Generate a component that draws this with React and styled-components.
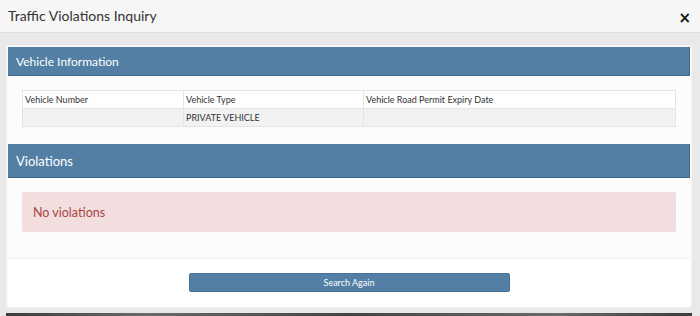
import React from 'react';
import styled, { createGlobalStyle } from 'styled-components';

const GlobalStyle = createGlobalStyle`
  html, body {
    margin: 0;
    padding: 0;
    background: #e9e9e9;
    font-family: Lato, "Open Sans", "Liberation Sans", sans-serif;
  }
`;

const Modal = styled.div`
  width: 700px;
  height: 316px;
  display: flex;
  flex-direction: column;
  background: #e9e9e9;
  overflow: hidden;
`;

const Header = styled.div`
  height: 32px;
  flex-shrink: 0;
  display: flex;
  align-items: center;
  justify-content: space-between;
  padding: 0 9px 0 8px;
  background: #f6f6f6;
  border-bottom: 1px solid #dedede;
`;

const Title = styled.h4`
  margin: 0;
  font-size: 14px;
  font-weight: 400;
  color: #333;
  padding-bottom: 1px;
`;

const Close = styled.button`
  border: 0;
  background: none;
  padding: 0;
  font-size: 15px;
  font-weight: 700;
  color: #111;
  line-height: 1;
  cursor: pointer;
  font-family: "DejaVu Sans", sans-serif;
  margin-top: 4px;
`;

const Body = styled.div`
  flex: 1;
  padding: 12px 8px 0 6px;
  display: flex;
  flex-direction: column;
`;

const Panel = styled.div`
  flex-shrink: 0;
  background: #fcfcfc;
  border: 1px solid #f3f3f3;
  border-radius: 3px;
  padding: 1px 1px 0;
`;

const SectionHeader = styled.div`
  height: ${p => p.$h}px;
  box-sizing: border-box;
  display: flex;
  align-items: center;
  padding-left: 8px;
  background: #527fa3;
  border-right: 1px solid #3e6889;
  border-bottom: 1px solid #3e6889;
  color: #fff;
  font-size: ${p => p.$size || 12}px;
  margin-top: ${p => p.$top || 0}px;
`;

const Table = styled.table`
  margin: 14px 14px 0 14px;
  width: calc(100% - 28px);
  table-layout: fixed;
  border-collapse: collapse;
  font-size: 9px;
  color: #333;
`;

const Cell = styled.td`
  height: 18px;
  padding: 0 2px;
  border: 1px solid #e4e4e4;
  background: ${p => (p.$alt ? '#f2f2f2' : '#fff')};
  width: ${p => p.$w || 'auto'};
  box-sizing: border-box;
`;

const Alert = styled.div`
  margin: 14px 14px 0 14px;
  height: 40px;
  display: flex;
  align-items: center;
  padding-left: 11px;
  background: #f2dede;
  border-radius: 2px;
  color: #a94442;
  font-size: 12.5px;
`;

const Footer = styled.div`
  margin-top: 26px;
  border-top: 1px solid #f0f0f0;
  background: #fff;
  padding: 14px 0 15px;
  display: flex;
  justify-content: center;
`;

const Button = styled.button`
  width: 321px;
  height: 19px;
  border: 1px solid #46729a;
  border-radius: 2px;
  background: #527fa3;
  color: #fff;
  font-family: inherit;
  font-size: 9px;
  cursor: pointer;
`;

const Floor = styled.div`
  margin-top: auto;
  height: 3px;
  flex-shrink: 0;
  background: linear-gradient(90deg, #3c3c3c, #6a6a6a 20%, #444 50%, #6a6a6a 80%, #3c3c3c);
`;

export default function App() {
  return (
    <>
      <GlobalStyle />
      <Modal>
        <Header>
          <Title>Traffic Violations Inquiry</Title>
          <Close>×</Close>
        </Header>
        <Body>
          <Panel>
            <SectionHeader $h={29}>Vehicle Information</SectionHeader>
            <Table>
              <tbody>
                <tr>
                  <Cell $w="161px">Vehicle Number</Cell>
                  <Cell $w="180px">Vehicle Type</Cell>
                  <Cell>Vehicle Road Permit Expiry Date</Cell>
                </tr>
                <tr>
                  <Cell $alt></Cell>
                  <Cell $alt>PRIVATE VEHICLE</Cell>
                  <Cell $alt></Cell>
                </tr>
              </tbody>
            </Table>
            <SectionHeader $h={34} $top={17} $size={13}>Violations</SectionHeader>
            <Alert>No violations</Alert>
            <Footer>
              <Button>Search Again</Button>
            </Footer>
          </Panel>
          <Floor />
        </Body>
      </Modal>
    </>
  );
}
